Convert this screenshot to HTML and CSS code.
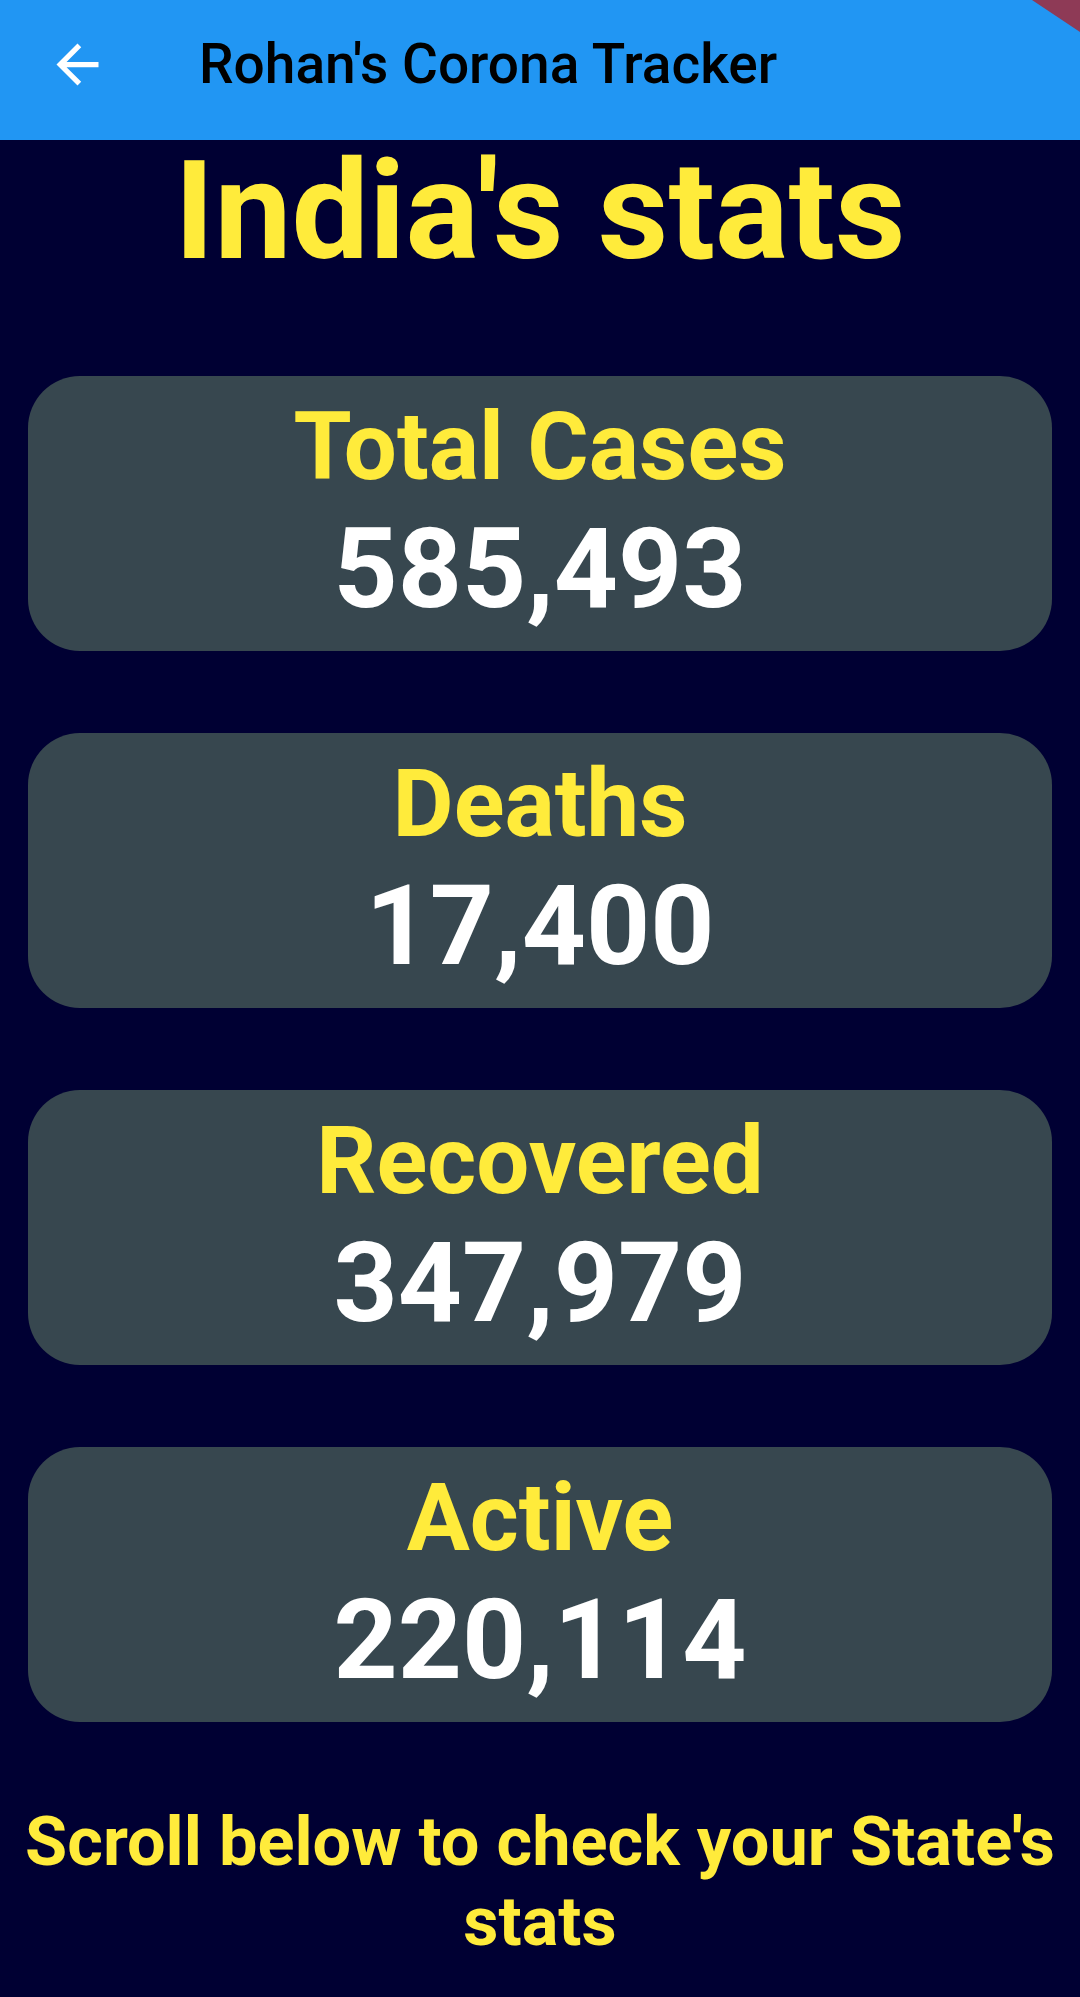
FILE: index.html
```html
<!DOCTYPE html>
<html lang="en">
<head>
<meta charset="utf-8">
<title>Rohan's Corona Tracker</title>
<link rel="stylesheet" href="styles.css">
</head>
<body>
<header class="appbar">
  <span class="back">
    <svg viewBox="0 0 24 24" width="63" height="63"><path fill="#fff" d="M20 11H7.83l5.59-5.59L12 4l-8 8 8 8 1.41-1.41L7.83 13H20v-2z"/></svg>
  </span>
  <h1 class="appbar-title">Rohan's Corona Tracker</h1>
  <span class="debug-corner"></span>
</header>
<main class="content">
  <h2 class="headline">India's stats</h2>
  <section class="card">
    <div class="card-label">Total Cases</div>
    <div class="card-value">585,493</div>
  </section>
  <section class="card">
    <div class="card-label">Deaths</div>
    <div class="card-value">17,400</div>
  </section>
  <section class="card">
    <div class="card-label">Recovered</div>
    <div class="card-value">347,979</div>
  </section>
  <section class="card">
    <div class="card-label">Active</div>
    <div class="card-value">220,114</div>
  </section>
  <p class="footer-note">Scroll below to check your State's stats</p>
</main>
</body>
</html>
```
FILE: styles.css
```css
html, body {
  margin: 0;
  padding: 0;
}
body {
  background: #000033;
  font-family: Roboto, "Liberation Sans", sans-serif;
  width: 1080px;
  height: 1997px;
  overflow: hidden;
}
.appbar {
  position: relative;
  height: 140px;
  background: #2196F3;
  display: flex;
  align-items: flex-start;
  overflow: hidden;
}
.back {
  display: flex;
  width: 63px;
  height: 63px;
  margin: 33px 0 0 46px;
}
.appbar-title {
  margin: 33px 0 0 90px;
  font-size: 55px;
  font-weight: 500;
  color: #000;
  line-height: 62px;
}
.debug-corner {
  position: absolute;
  top: 0;
  right: 0;
  width: 80px;
  height: 80px;
  background: #8E3A56;
  clip-path: polygon(32px 0, 100% 0, 100% 32px);
}
.content {
  display: flex;
  flex-direction: column;
  align-items: center;
}
.headline {
  margin: -4px 0 0;
  font-size: 137.5px;
  line-height: 150px;
  font-weight: 700;
  color: #FFEB3B;
}
.card {
  box-sizing: border-box;
  width: 1024px;
  height: 275px;
  margin-top: 82px;
  padding-top: 16px;
  background: #37474F;
  border-radius: 52px;
  display: flex;
  flex-direction: column;
  align-items: center;
}
.content .headline + .card {
  margin-top: 90px;
}
.card-label {
  font-size: 94px;
  line-height: 110px;
  font-weight: 700;
  color: #FFEB3B;
}
.card-value {
  font-size: 112px;
  line-height: 134px;
  font-weight: 700;
  color: #fff;
}
.footer-note {
  margin: 80px 8px 0;
  font-size: 68.5px;
  line-height: 80px;
  font-weight: 700;
  color: #FFEB3B;
  text-align: center;
}
```
